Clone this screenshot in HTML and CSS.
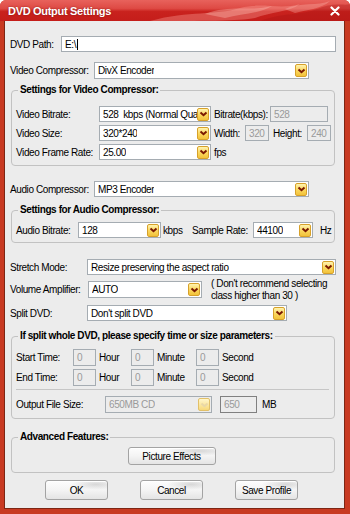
FILE: index.html
```html
<!DOCTYPE html>
<html lang="en">
  <head>
    <meta charset="UTF-8" />
    <title>DVD Output Settings</title>
    <link rel="stylesheet" href="styles.css">
  </head>
  <body>
    <div class="window">
      <div class="titlebar">
        <svg class="flames" width="350" height="21" viewBox="0 0 350 21">
          <path d="M150 21 C190 10 215 16 240 8 C262 2 280 10 300 4 C290 12 270 12 255 18 C240 21 200 21 150 21 Z" fill="rgba(255,170,160,0.35)" />
          <path d="M205 14 C230 4 250 12 272 6 C262 13 242 14 225 18 Z" fill="rgba(255,200,190,0.35)" />
          <path d="M260 21 C285 12 300 16 320 8 C335 2 345 6 350 4 L350 21 Z" fill="rgba(170,20,20,0.35)" />
          <path d="M285 9 C300 2 318 6 330 1 C322 9 305 10 295 13 Z" fill="rgba(255,200,190,0.3)" />
        </svg>
        <span class="title">DVD Output Settings</span>
        <svg class="close" width="10" height="10" viewBox="0 0 10 10">
          <path d="M1.5 1.5 L8.5 8.5 M8.5 1.5 L1.5 8.5" stroke="#fff" stroke-width="2.2" stroke-linecap="round" />
        </svg>
      </div>

      <div class="client">
        <!-- DVD path -->
        <div class="row row-path">
          <span class="lbl lbl-path">DVD Path:</span>
          <div class="field w-path">E:\<span class="caret"></span></div>
        </div>

        <!-- Video compressor -->
        <div class="row row-vcomp">
          <span class="lbl lbl-comp">Video Compressor:</span>
          <div class="combo w-comp"><span class="val">DivX Encoder</span><span class="arrow"><svg width="9" height="6" viewBox="0 0 9 6"><path d="M1.5 1.5 L4.5 4.2 L7.5 1.5" /></svg></span></div>
        </div>

        <fieldset class="group group-video">
          <legend>Settings for Video Compressor:</legend>
          <div class="row">
            <span class="lbl lbl-video">Video Bitrate:</span>
            <div class="combo w-video"><span class="val">528&nbsp; kbps (Normal Quality)</span><span class="arrow"><svg width="9" height="6" viewBox="0 0 9 6"><path d="M1.5 1.5 L4.5 4.2 L7.5 1.5" /></svg></span></div>
            <span class="lbl lbl-kbps">Bitrate(kbps):</span>
            <div class="field off w-kbps">528</div>
          </div>
          <div class="row row-gap">
            <span class="lbl lbl-video">Video Size:</span>
            <div class="combo w-video"><span class="val">320*240</span><span class="arrow"><svg width="9" height="6" viewBox="0 0 9 6"><path d="M1.5 1.5 L4.5 4.2 L7.5 1.5" /></svg></span></div>
            <span class="lbl lbl-width">Width:</span>
            <div class="field off w-dim">320</div>
            <span class="lbl lbl-height">Height:</span>
            <div class="field off w-dim">240</div>
          </div>
          <div class="row row-gap">
            <span class="lbl lbl-video">Video Frame Rate:</span>
            <div class="combo w-video"><span class="val">25.00</span><span class="arrow"><svg width="9" height="6" viewBox="0 0 9 6"><path d="M1.5 1.5 L4.5 4.2 L7.5 1.5" /></svg></span></div>
            <span class="lbl lbl-fps">fps</span>
          </div>
        </fieldset>

        <!-- Audio compressor -->
        <div class="row row-acomp">
          <span class="lbl lbl-comp">Audio Compressor:</span>
          <div class="combo w-comp"><span class="val">MP3 Encoder</span><span class="arrow"><svg width="9" height="6" viewBox="0 0 9 6"><path d="M1.5 1.5 L4.5 4.2 L7.5 1.5" /></svg></span></div>
        </div>

        <fieldset class="group group-audio">
          <legend>Settings for Audio Compressor:</legend>
          <div class="row">
            <span class="lbl lbl-abit">Audio Bitrate:</span>
            <div class="combo w-abit"><span class="val">128</span><span class="arrow"><svg width="9" height="6" viewBox="0 0 9 6"><path d="M1.5 1.5 L4.5 4.2 L7.5 1.5" /></svg></span></div>
            <span class="lbl lbl-unit-kbps">kbps</span>
            <span class="lbl lbl-rate">Sample Rate:</span>
            <div class="combo w-rate"><span class="val">44100</span><span class="arrow"><svg width="9" height="6" viewBox="0 0 9 6"><path d="M1.5 1.5 L4.5 4.2 L7.5 1.5" /></svg></span></div>
            <span class="lbl lbl-hz">Hz</span>
          </div>
        </fieldset>

        <div class="row row-stretch">
          <span class="lbl lbl-mode">Stretch Mode:</span>
          <div class="combo w-stretch"><span class="val">Resize preserving the aspect ratio</span><span class="arrow"><svg width="9" height="6" viewBox="0 0 9 6"><path d="M1.5 1.5 L4.5 4.2 L7.5 1.5" /></svg></span></div>
        </div>

        <div class="row row-volume">
          <span class="lbl lbl-vol">Volume Amplifier:</span>
          <div class="combo w-vol"><span class="val">AUTO</span><span class="arrow"><svg width="9" height="6" viewBox="0 0 9 6"><path d="M1.5 1.5 L4.5 4.2 L7.5 1.5" /></svg></span></div>
          <span class="note">( Don't recommend selecting<br>class higher than 30 )</span>
        </div>

        <div class="row row-split">
          <span class="lbl lbl-mode">Split DVD:</span>
          <div class="combo w-split"><span class="val">Don't split DVD</span><span class="arrow"><svg width="9" height="6" viewBox="0 0 9 6"><path d="M1.5 1.5 L4.5 4.2 L7.5 1.5" /></svg></span></div>
        </div>

        <fieldset class="group group-split">
          <legend>If split whole DVD, please specify time or size parameters:</legend>
          <div class="row row-time">
            <span class="lbl lbl-time">Start Time:</span>
            <div class="field off w-time">0</div>
            <span class="lbl unit-hour">Hour</span>
            <div class="field off w-time">0</div>
            <span class="lbl unit-min">Minute</span>
            <div class="field off w-time">0</div>
            <span class="lbl unit-sec">Second</span>
          </div>
          <div class="row row-time row-gap">
            <span class="lbl lbl-time">End Time:</span>
            <div class="field off w-time">0</div>
            <span class="lbl unit-hour">Hour</span>
            <div class="field off w-time">0</div>
            <span class="lbl unit-min">Minute</span>
            <div class="field off w-time">0</div>
            <span class="lbl unit-sec">Second</span>
          </div>
          <div class="separator"></div>
          <div class="row row-size">
            <span class="lbl lbl-size">Output File Size:</span>
            <div class="combo off w-size"><span class="val">650MB CD</span><span class="arrow"><svg width="9" height="6" viewBox="0 0 9 6"><path d="M1.5 1.5 L4.5 4.2 L7.5 1.5" /></svg></span></div>
            <div class="field off dark w-mb">650</div>
            <span class="lbl unit-mb">MB</span>
          </div>
        </fieldset>

        <fieldset class="group group-adv">
          <legend>Advanced Features:</legend>
          <div class="adv-body">
            <button class="btn btn-effects">Picture Effects</button>
          </div>
        </fieldset>

        <div class="footer">
          <button class="btn btn-main">OK</button>
          <button class="btn btn-main">Cancel</button>
          <button class="btn btn-main">Save Profile</button>
        </div>
      </div>
    </div>
  </body>
</html>
```

FILE: styles.css
```css
* {
  box-sizing: border-box;
}

body {
  margin: 0;
  font-family: 'Liberation Sans', Arial, sans-serif;
  font-size: 10px;
  letter-spacing: -0.4px;
  color: #000;
  background: #fff;
}

.window {
  width: 350px;
  height: 514px;
  display: flex;
  flex-direction: column;
  padding: 0 5px 5px 4px;
  background: #c83a22;
  border-radius: 6px 6px 0 0;
}

/* Title bar */
.titlebar {
  position: relative;
  height: 21px;
  margin: 0 -5px 0 -4px;
  padding: 0 10px 0 8px;
  display: flex;
  align-items: center;
  justify-content: space-between;
  overflow: hidden;
  border-radius: 6px 6px 0 0;
  background: linear-gradient(to bottom, #e8625c 0%, #de4a44 40%, #c9221e 55%, #c41d1a 100%);
}

.flames {
  position: absolute;
  left: 0;
  top: 0;
}

.title {
  position: relative;
  color: #fff;
  font-size: 11px;
  font-weight: bold;
  letter-spacing: -0.3px;
  text-shadow: 0 0 2px rgba(90, 0, 0, 0.6);
}

.close {
  position: relative;
}

/* Client area */
.client {
  flex: 1;
  padding: 15px 0 0 5px;
  background: #ececec;
  border: 1px solid #7d2614;
  border-top: none;
}

.row {
  display: flex;
  align-items: center;
  height: 16px;
  white-space: nowrap;
}

.lbl {
  flex: none;
}

.field,
.combo {
  flex: none;
  height: 100%;
  display: flex;
  align-items: center;
  padding-left: 3px;
  background: #fff;
  border: 1px solid #a5acb2;
  overflow: hidden;
}

.field.off,
.combo.off {
  background: #ececec;
  color: #9a9a9a;
}

.field.dark {
  border-color: #808080;
}

.combo {
  justify-content: space-between;
  padding-right: 1px;
}

.combo .val {
  overflow: hidden;
}

.arrow {
  flex: none;
  width: 12px;
  height: 13px;
  display: flex;
  align-items: center;
  justify-content: center;
  background: linear-gradient(to bottom, #fff3b0 0%, #fbd860 50%, #f2c23a 100%);
  border: 1px solid #d7a12a;
  border-radius: 2px;
}

.arrow path {
  fill: none;
  stroke: #7a1800;
  stroke-width: 2;
}

.combo.off .arrow {
  background: linear-gradient(to bottom, #fff6cc, #f7d97a);
  border-color: #e2c068;
}

.combo.off .arrow path {
  stroke: #e8d7a8;
}

.caret {
  width: 1px;
  height: 11px;
  margin-left: 1px;
  background: #000;
}

/* Top rows */
.lbl-path { width: 51px; }
.w-path { width: 275px; }
.lbl-comp { width: 84px; }
.w-comp { width: 215px; }

.row-vcomp {
  margin-top: 10px;
  height: 17px;
}

.row-acomp {
  margin-top: 15px;
}

/* Group boxes */
.group {
  width: 324px;
  margin: 0 0 0 1px;
  padding: 10px 5px 5px 4px;
  border: 1px solid #c2c2c2;
  border-radius: 4px;
  min-width: 0;
}

.group legend {
  margin-left: 2px;
  padding: 0 2px;
  line-height: 12px;
  font-weight: bold;
}

.row-gap {
  margin-top: 3px;
}

.group-video {
  margin-top: 5px;
}

.lbl-video { width: 83px; }
.w-video { width: 112px; }

.lbl-kbps {
  width: 59px;
  padding-left: 3px;
}

.w-kbps { width: 58px; }

.lbl-width {
  width: 34px;
  padding-left: 3px;
}

.lbl-height {
  width: 38px;
  padding-left: 4px;
}

.w-dim { width: 24px; }

.lbl-fps { padding-left: 3px; }

.group-audio {
  margin-top: 7px;
  padding-top: 6px;
  padding-bottom: 4px;
}

.lbl-abit { width: 62px; }
.w-abit { width: 83px; }

.lbl-unit-kbps {
  width: 31px;
  padding-left: 2px;
}

.lbl-rate { width: 61px; }
.w-rate { width: 60px; }
.lbl-hz { padding-left: 7px; }

/* Middle rows */
.row-stretch { margin-top: 16px; }
.lbl-mode { width: 77px; }
.w-stretch { width: 249px; }

.row-volume {
  margin-top: 6px;
  height: 17px;
}

.lbl-vol { width: 78px; }
.w-vol { width: 114px; }

.note {
  margin-left: 9px;
  line-height: 12px;
}

.row-split { margin-top: 7px; }
.w-split { width: 200px; }

/* Split group */
.group-split {
  margin-top: 9px;
  padding-top: 7px;
}

.row-time { height: 17px; }
.lbl-time { width: 57px; }
.w-time { width: 23px; }

.unit-hour {
  width: 35px;
  padding-left: 3px;
}

.unit-min {
  width: 42px;
  padding-left: 3px;
}

.unit-sec { padding-left: 3px; }

.separator {
  height: 1px;
  margin-top: 3px;
  background: #c6c6c6;
}

.row-size {
  margin-top: 6px;
  height: 17px;
}

.lbl-size { width: 89px; }
.w-size { width: 107px; }

.w-mb {
  width: 37px;
  margin-left: 8px;
}

.unit-mb { padding-left: 5px; }

/* Advanced group */
.group-adv {
  margin-top: 12px;
  padding-top: 4px;
  padding-bottom: 7px;
}

.adv-body {
  display: flex;
  justify-content: center;
  padding-right: 2px;
}

/* Buttons */
.btn {
  font-family: inherit;
  font-size: 10px;
  letter-spacing: -0.4px;
  color: #000;
  border: 1px solid #a3a3a3;
  border-radius: 3px;
  background:
    radial-gradient(ellipse 40% 30% at 82% 18%, rgba(150, 150, 150, 0.35), transparent 100%),
    linear-gradient(to bottom, #fdfdfd 0%, #f4f4f4 50%, #e4e4e4 100%);
  box-shadow: inset 0 1px 0 #fff;
  padding: 0;
}

.btn-effects {
  width: 88px;
  height: 18px;
}

.footer {
  display: flex;
  gap: 32px;
  margin-top: 7px;
  padding-left: 35px;
}

.btn-main {
  width: 63px;
  height: 20px;
}
```
